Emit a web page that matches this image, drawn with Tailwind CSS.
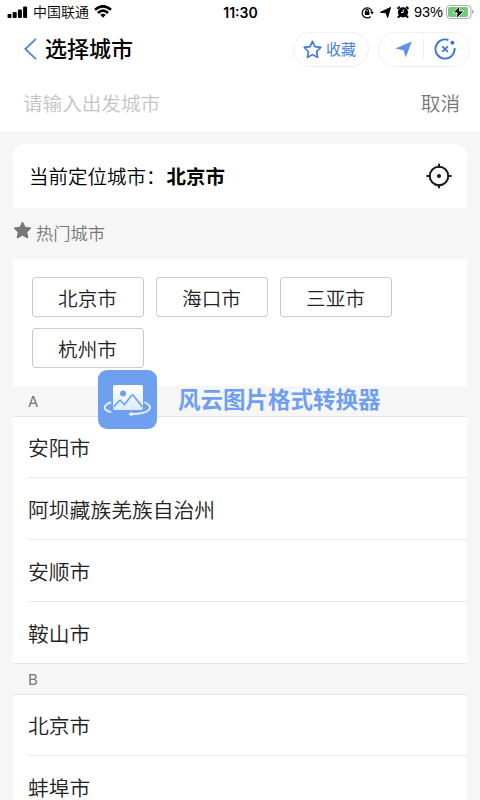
<!DOCTYPE html>
<html lang="zh-CN">
<head>
<meta charset="utf-8">
<title>选择城市</title>
<script src="https://cdn.jsdelivr.net/npm/@tailwindcss/browser@4"></script>
</head>
<body class="bg-[#f6f6f6]">
<div class="relative flex h-[800px] w-[480px] flex-col overflow-hidden bg-[#f6f6f6] font-['Noto_Sans_CJK_SC',sans-serif] font-[350] text-[#222]">
  <header class="shrink-0 bg-white">
    <div class="flex h-[24px] items-center justify-between pl-[7px] pr-[6px] text-black">
      <div class="flex w-[200px] items-center">
        <svg class="mr-[5px]" width="21" height="12" viewBox="0 0 21 12"><rect x="0.5" y="8" width="4" height="4" rx="1"/><rect x="5.7" y="6" width="4" height="6" rx="1"/><rect x="10.9" y="3.5" width="4" height="8.500" rx="1"/><rect x="16.100" y="0.500" width="4" height="11.500" rx="1"/></svg>
        <span class="pb-[2px] text-[14px] leading-[22px]">中国联通</span>
        <svg class="ml-[5px] mb-px" width="18" height="13" viewBox="0 0 18 13" fill="none" stroke="#000" stroke-width="2.700"><path d="M1 4.800Q9-2.200 17 4.800"/><path d="M3.900 7.900Q9 3.400 14.100 7.900"/><path d="M6.200 9.800Q9 7.700 11.800 9.800L9 12.700Z" fill="#000" stroke="none"/></svg>
      </div>
      <span class="font-['Inter','Liberation_Sans',sans-serif] text-[14px] font-semibold">11:30</span>
      <div class="flex w-[200px] items-center justify-end">
        <svg class="mr-[6px]" width="13" height="13" viewBox="0 0 13 13" fill="none" stroke="#000" stroke-width="1.200"><path d="M9.600 10.500A5 5 0 1 1 11 5.500"/><path d="M9.100 5.800h3.800l-1.900 2.800z" fill="#000" stroke="none"/><rect x="3.800" y="5.500" width="4.600" height="3.600" rx=".5" fill="#000" stroke="none"/><path d="M4.900 6V4.600a1.200 1.200 0 0 1 2.400 0V6"/></svg>
        <svg class="mr-[6px]" width="11" height="11" viewBox="0 0 11 11"><path d="M10.500.5 7.600 10.500 6.200 5.800.5 5.300Z" stroke="#000" stroke-width="1" stroke-linejoin="round"/></svg>
        <svg class="mr-[5px]" width="12" height="12" viewBox="0 0 12 12"><path d="M2.200 1.200 1.200 2.200M9.800 1.200l1 1M2.500 10l-1 1M9.500 10l1 1" stroke="#000" stroke-width="2" stroke-linecap="round"/><circle cx="6" cy="6.300" r="5.100"/><path d="M6.200 3.500v3H4" fill="none" stroke="#fff"/></svg>
        <span class="mr-[3px] font-['Liberation_Sans',sans-serif] text-[14.500px] font-normal leading-[24px]">93%</span>
        <svg width="28" height="14" viewBox="0 0 28 14"><rect x="0.500" y="0.500" width="24.500" height="13" rx="3.500" fill="#fff" stroke="#aaa"/><rect x="2" y="2" width="20" height="10" rx="2" fill="#73ca7a"/><path d="M26 4.700q1.700 .5 1.700 2t-1.700 2z" fill="#aaa"/><path d="M14.100.7 7 7.800h4.200L10.300 13.600 18 6h-4.800z" stroke="#fff" stroke-width=".8"/></svg>
      </div>
    </div>
    <div class="flex h-[50px] items-center pl-[24px] pr-[10px]">
      <svg class="mr-[8px]" width="13" height="22" viewBox="0 0 13 22" fill="none" stroke="#4a86e0" stroke-width="1.800"><path d="M12 .8 1.300 11 12 21.200"/></svg>
      <h1 class="pb-[5px] text-[22px] font-medium leading-[30px] text-black">选择城市</h1>
      <div class="ml-auto flex h-[35px] w-[76px] items-center justify-center gap-[4px] rounded-full border border-[#f0f0f0] pr-[3px] text-[#4a7fdc]">
        <svg width="19" height="19" viewBox="0 0 19 19" fill="none" stroke="#3c73dc" stroke-width="1.600" stroke-linejoin="round"><path d="m9.500 1.300 2.500 5.300 5.800.8-4.200 4.100 1 5.900-5.100-2.800-5.100 2.800 1-5.900L1.200 7.400 7 6.600Z"/></svg>
        <span class="text-[15px] font-normal leading-[20px]">收藏</span>
      </div>
      <div class="ml-[9px] flex h-[35px] w-[92px] items-center rounded-full border border-[#f0f0f0]">
        <div class="flex w-[45px] justify-center border-r border-[#eee] py-[2px] pl-[4px]"><svg width="17" height="17" viewBox="0 0 17 17" fill="#5a94ef"><path d="M16.700.5 10.800 16.500 8.500 9.300.3 7.600Z"/></svg></div>
        <div class="flex flex-1 justify-center pr-[3px]"><svg width="22" height="22" viewBox="0 0 22 22" fill="none" stroke="#3c73dc" stroke-width="1.900"><path d="M14.400 2A9.600 9.600 0 1 0 20.600 10"/><circle cx="18.400" cy="4.800" r="2" fill="#3c73dc" stroke="none"/><path d="m8.300 8.300 5.600 5.600m0-5.600-5.600 5.600" stroke-width="1.700"/></svg></div>
      </div>
    </div>
    <div class="flex h-[57px] items-center justify-between pl-[23px] pr-[20px] text-[19.600px] leading-[28px]">
      <span class="text-[#c4c4c4]">请输入出发城市</span>
      <span class="text-[#777]">取消</span>
    </div>
  </header>
  <main class="mx-[13px] mt-[13px]">
    <section class="flex h-[64px] items-center rounded-t-[12px] bg-white pl-[16px] pr-[15px] text-[19.500px] text-black">
      <span>当前定位城市：</span><span class="ml-[1px] font-bold">北京市</span>
      <svg class="ml-auto" width="26" height="26" viewBox="0 0 26 26" fill="none" stroke="#1c1c1c" stroke-width="2"><circle cx="13" cy="13" r="9.300"/><circle cx="13" cy="13" r="2.100" fill="#1c1c1c" stroke="none"/><path d="M13 .8v4M13 21.200v4M.4 13h4M21.600 13h4"/></svg>
    </section>
    <div class="flex h-[51px] items-center text-[17.300px] text-[#777]">
      <svg class="mb-[6px] mr-[4px]" width="19" height="19" viewBox="0 0 19 19" fill="#777" stroke="#777" stroke-linejoin="round"><path d="m9.500 1 2.600 5.300 5.900.8-4.200 4.100 1 5.800-5.300-2.700L4.200 17l1-5.800L1 7.100l5.900-.8Z"/></svg>
      <span class="pb-[2px]">热门城市</span>
    </div>
    <section class="grid h-[127px] grid-cols-[112px_112px_112px] content-start gap-x-[12px] gap-y-[11px] bg-white pl-[18.500px] pt-[18px] text-[19.600px] leading-none">
      <div class="flex h-[40px] items-center justify-center rounded-[3px] border border-[#ccc] pt-px">北京市</div>
      <div class="flex h-[40px] items-center justify-center rounded-[3px] border border-[#ccc] pt-px">海口市</div>
      <div class="flex h-[40px] items-center justify-center rounded-[3px] border border-[#ccc] pt-px">三亚市</div>
      <div class="flex h-[40px] items-center justify-center rounded-[3px] border border-[#ccc] pt-px">杭州市</div>
    </section>
    <h2 class="flex h-[31px] items-center border-b border-[#e4e4e4] pl-[15px] pt-[2px] font-['Inter','Liberation_Sans',sans-serif] text-[15px] font-normal text-[#777]">A</h2>
    <ul class="border-b border-[#e4e4e4] bg-white pl-[15px] text-[20.800px] leading-none">
      <li class="flex h-[61px] items-center border-b border-[#e8e8e8] pt-px">安阳市</li>
      <li class="flex h-[62px] items-center border-b border-[#e8e8e8] pt-[2px]">阿坝藏族羌族自治州</li>
      <li class="flex h-[62px] items-center border-b border-[#e8e8e8] pt-[2px]">安顺市</li>
      <li class="flex h-[61px] items-center pt-[2px]">鞍山市</li>
    </ul>
    <h2 class="flex h-[31px] items-center border-b border-[#e4e4e4] pl-[15px] pt-[2px] font-['Inter','Liberation_Sans',sans-serif] text-[15px] font-normal text-[#777]">B</h2>
    <ul class="bg-white pl-[15px] text-[20.800px] leading-none">
      <li class="flex h-[61px] items-center border-b border-[#e8e8e8] pt-px">北京市</li>
      <li class="flex h-[62px] items-center">蚌埠市</li>
    </ul>
  </main>
  <div class="absolute left-[98px] top-[370px] flex h-[59px] items-center gap-[21px]">
    <svg width="59" height="59" viewBox="0 0 59 59"><defs><linearGradient id="paper" x2="0" y2="1"><stop stop-color="#fff"/><stop offset="1" stop-color="#dcebfc"/></linearGradient></defs><rect width="59" height="59" rx="9" fill="#6fa0f0"/><rect x="15" y="15" width="30" height="25" rx="2" fill="url(#paper)"/><circle cx="25" cy="23.500" r="3" fill="#6fa0f0"/><path d="m15.500 37 5.500-6q1-1 2 0l3.500 3.500 6.500-8.300q1.500-2 3 0L44.500 37" fill="none" stroke="#6fa0f0" stroke-width="1.700"/><path d="M12.500 32.500c-8 3-7.500 7.500 0 9.500M47 32.500c9 4 7 11-14 11.700" fill="none" stroke="#e3edfc" stroke-width="1.900" stroke-linecap="round"/><path d="m30 44.200 4.500-2.700v5z" fill="#e3edfc"/></svg>
    <span class="pb-[4px] text-[22.500px] font-bold leading-[30px] text-[#6fa0f0]">风云图片格式转换器</span>
  </div>
</div>
</body>
</html>
